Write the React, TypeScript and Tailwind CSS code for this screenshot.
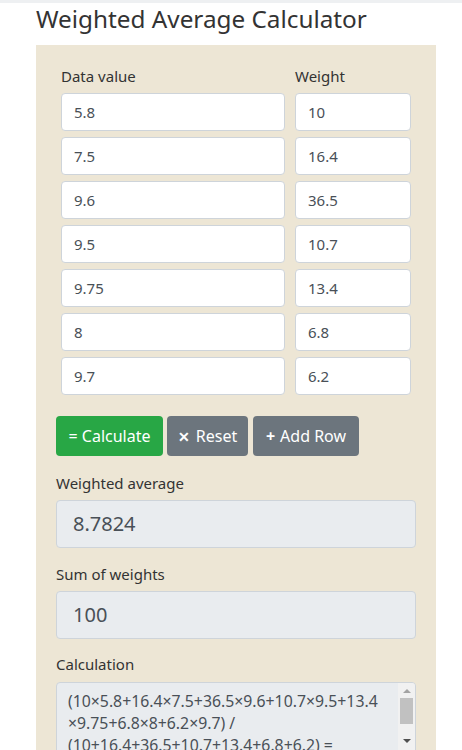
import React from 'react';

const rows = [
  { value: '5.8', weight: '10' },
  { value: '7.5', weight: '16.4' },
  { value: '9.6', weight: '36.5' },
  { value: '9.5', weight: '10.7' },
  { value: '9.75', weight: '13.4' },
  { value: '8', weight: '6.8' },
  { value: '9.7', weight: '6.2' },
];

const calcLines = [
  '(10×5.8+16.4×7.5+36.5×9.6+10.7×9.5+13.4',
  '×9.75+6.8×8+6.2×9.7) /',
  '(10+16.4+36.5+10.7+13.4+6.8+6.2) =',
  '878.24 / 100 = 8.7824',
];

const App = () => {
  return (
    <div className="h-[750px] overflow-hidden bg-white font-['Noto_Sans',sans-serif] text-[#212529]">
      <div className="h-[3px] bg-[#eef0f2]" />
      {/* Title */}
      <h1 className="ml-[36px] text-[24.3px] leading-[31px] font-normal text-[#333]">Weighted Average Calculator</h1>

      {/* Panel */}
      <div className="mt-[11px] ml-[36px] w-[400px] bg-[#ede6d5] p-[20px]">
        <div className="flex flex-col gap-[6px] px-[5px]">
          <div className="flex h-[22px] items-center text-[15px] text-[#333]">
            <div className="w-[234px]">Data value</div>
            <div>Weight</div>
          </div>
          {rows.map((r, i) => (
            <div key={i} className="flex gap-[10px]">
              <div className="flex h-[38px] w-[224px] items-center rounded-[4px] border border-[#ced4da] bg-white px-[12px] text-[15px] text-[#495057]">
                {r.value}
              </div>
              <div className="flex h-[38px] w-[116px] items-center rounded-[4px] border border-[#ced4da] bg-white px-[12px] text-[15px] text-[#495057]">
                {r.weight}
              </div>
            </div>
          ))}
        </div>

        {/* Buttons */}
        <div className="mt-[21px] flex gap-[4px]">
          <button className="flex h-[40px] w-[107px] items-center justify-center rounded-[4px] bg-[#28a745] text-[16px] text-white">
            = Calculate
          </button>
          <button className="flex h-[40px] w-[81px] items-center justify-center rounded-[4px] bg-[#6c757d] text-[16px] text-white">
            <span className="mr-[6px] text-[14px] font-bold">✕</span>Reset
          </button>
          <button className="ml-[1px] flex h-[40px] w-[106px] items-center justify-center rounded-[4px] bg-[#6c757d] text-[16px] text-white">
            <span className="mr-[5px] font-bold">+</span>Add Row
          </button>
        </div>

        {/* Results */}
        <div className="mt-[16px] flex h-[22px] items-center text-[15px] text-[#333]">Weighted average</div>
        <div className="mt-[6px] flex h-[48px] items-center rounded-[4px] border border-[#ced4da] bg-[#e9ecef] px-[16px] text-[20px] text-[#495057]">
          8.7824
        </div>

        <div className="mt-[15px] flex h-[22px] items-center text-[15px] text-[#333]">Sum of weights</div>
        <div className="mt-[6px] flex h-[48px] items-center rounded-[4px] border border-[#ced4da] bg-[#e9ecef] px-[16px] text-[20px] text-[#495057]">
          100
        </div>

        <div className="mt-[14px] flex h-[22px] items-center text-[15px] text-[#333]">Calculation</div>
        <div className="relative mt-[7px] h-[110px] overflow-hidden rounded-[4px] border border-[#ced4da] bg-[#e9ecef]">
          <div className="pl-[11px] pr-[24px] pt-[7px] text-[15.8px] leading-[22px] text-[#495057] whitespace-nowrap">
            {calcLines.map((l, i) => (
              <div key={i}>{l}</div>
            ))}
          </div>
          {/* scrollbar */}
          <div className="absolute top-0 right-0 bottom-0 flex w-[17px] flex-col items-center bg-[#f1f1f1]">
            <div className="mt-[6px] h-0 w-0 border-x-[4px] border-b-[4px] border-x-transparent border-b-[#a3a3a3]" />
            <div className="mt-[5px] h-[26px] w-[13px] bg-[#c1c1c1]" />
            <div className="mt-[15px] h-0 w-0 border-x-[4px] border-t-[4px] border-x-transparent border-t-[#505050]" />
          </div>
        </div>
      </div>
    </div>
  );
};

export default App;
